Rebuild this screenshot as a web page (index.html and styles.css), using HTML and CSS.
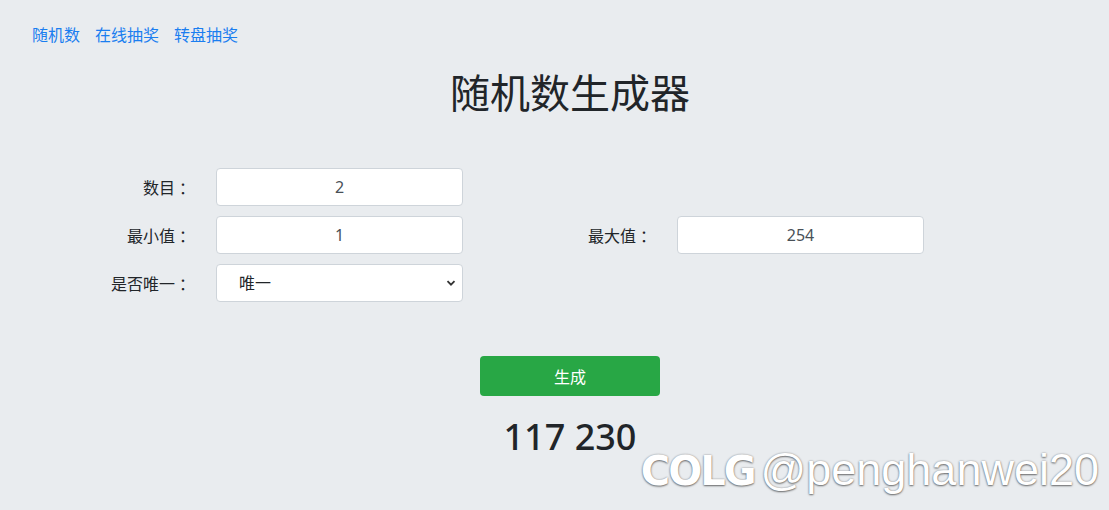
FILE: index.html
```html
<!DOCTYPE html>
<html lang="zh-CN">
<head>
  <meta charset="UTF-8" />
  <title>随机数生成器</title>
  <link rel="stylesheet" href="styles.css">
</head>
<body>
  <nav class="nav">
    <a href="#">随机数</a>
    <a href="#">在线抽奖</a>
    <a href="#">转盘抽奖</a>
  </nav>

  <main class="main">
    <h1 class="title">随机数生成器</h1>

    <form class="gen-form">
      <div class="form-row">
        <div class="field">
          <label class="field-label first">数目<span class="colon">：</span></label>
          <input class="field-input" type="text" value="2" />
        </div>
      </div>
      <div class="form-row">
        <div class="field">
          <label class="field-label first">最小值<span class="colon">：</span></label>
          <input class="field-input" type="text" value="1" />
        </div>
        <div class="field">
          <label class="field-label second">最大值<span class="colon">：</span></label>
          <input class="field-input" type="text" value="254" />
        </div>
      </div>
      <div class="form-row">
        <div class="field">
          <label class="field-label first">是否唯一<span class="colon">：</span></label>
          <div class="select-wrap">
            <select class="field-select">
              <option>唯一</option>
              <option>可重复</option>
            </select>
            <svg class="chevron" width="10" height="10" viewBox="0 0 10 10">
              <path d="M1.5 3.2 L5 6.7 L8.5 3.2" fill="none" stroke="#333" stroke-width="1.8" />
            </svg>
          </div>
        </div>
      </div>

      <div class="actions">
        <button type="button" class="btn-gen">生成</button>
      </div>
    </form>

    <div class="result">117 230</div>
  </main>

  <!-- watermark over the page -->
  <div class="watermark"><span class="wm-logo">COLG</span><span class="wm-name">@penghanwei20</span></div>
</body>
</html>
```

FILE: styles.css
```css
html, body { height: 100%; }
body {
  margin: 0;
  background: #e9ecef;
  color: #212529;
  font-family: "Noto Sans", "Noto Sans CJK SC", sans-serif;
  font-size: 16px;
  position: relative;
  overflow: hidden;
}
.nav {
  display: flex;
  gap: 15px;
  padding: 23px 32px 0;
  line-height: 24px;
}
.nav a { color: #1a7ef0; text-decoration: none; }

.main { width: 1140px; }
.title {
  margin: 22px 0 0;
  text-align: center;
  font-size: 40px;
  font-weight: 400;
  line-height: 48px;
}

.gen-form { margin-top: 51px; }
.form-row { display: flex; margin-bottom: 10px; }
.field { display: flex; align-items: center; }
.field-label {
  box-sizing: border-box;
  text-align: right;
  padding-right: 25px;
  color: #212529;
}
.field-label .colon { display: inline-block; width: 16px; text-align: center; text-indent: 4px; }
.field-label.first { width: 216px; }
.field-label.second { width: 214px; }
.field-input, .field-select {
  box-sizing: border-box;
  width: 247px;
  height: 38px;
  border: 1px solid #ced4da;
  border-radius: 4px;
  background: #fff;
  color: #495057;
  font: inherit;
  font-size: 16px;
}
.field-input { text-align: center; padding: 0 12px; }
.select-wrap { position: relative; }
.field-select {
  appearance: none;
  -webkit-appearance: none;
  padding: 0 22px;
  color: #212529;
}
.chevron { position: absolute; right: 7px; top: 14px; pointer-events: none; }

.actions { display: flex; justify-content: center; margin-top: 54px; }
.btn-gen {
  width: 180px;
  height: 40px;
  border: none;
  border-radius: 4px;
  background: #28a745;
  color: #fff;
  font: inherit;
  font-size: 16px;
  cursor: pointer;
}
.result {
  margin-top: 17px;
  text-align: center;
  font-size: 36px;
  font-weight: 500;
  line-height: 48px;
  color: #212529;
}

.watermark {
  position: absolute;
  right: 10px;
  bottom: 14px;
  display: flex;
  align-items: baseline;
  gap: 6px;
  color: #fff;
  text-shadow: 0 1px 2px rgba(0,0,0,0.5), 0 0 2px rgba(0,0,0,0.35);
}
.wm-logo {
  font-family: "DejaVu Sans", sans-serif;
  font-weight: bold;
  font-size: 40px;
  letter-spacing: -2px;
}
.wm-name {
  font-family: "Liberation Sans", Arial, sans-serif;
  font-size: 45px;
}
```
